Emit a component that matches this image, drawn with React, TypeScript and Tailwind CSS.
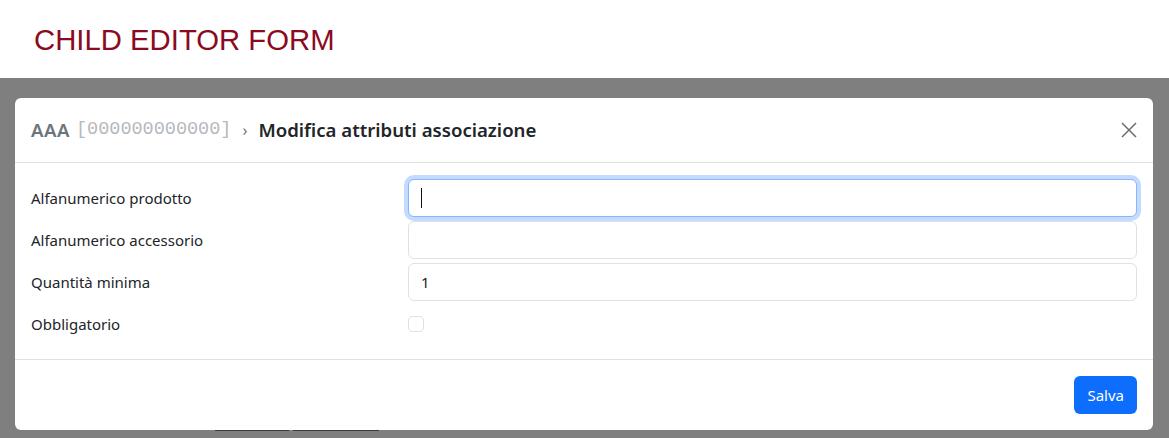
import React from "react";

const sans = { fontFamily: '"Noto Sans", "Open Sans", sans-serif' };

function Row({ label, children }: { label: string; children: React.ReactNode }) {
  return (
    <div className="flex items-center h-[38px]">
      <div className="w-[377px] shrink-0 text-[15px] text-[#212529]">{label}</div>
      <div className="flex-1">{children}</div>
    </div>
  );
}

export default function App() {
  return (
    <div className="w-[1169px] h-[438px] overflow-hidden flex flex-col bg-white" style={sans}>
      <div className="h-[78px] shrink-0 bg-white pl-[34px] pt-[22px]">
        <h1
          className="text-[29.3px] leading-[36px] text-[#8b0a1e]"
          style={{ fontFamily: '"Liberation Sans", Arial, sans-serif' }}
        >
          CHILD EDITOR FORM
        </h1>
      </div>
      <div className="relative flex-1 bg-[#7f7f7f] pt-[20px] px-[15px]">
        <div className="absolute left-[215px] top-[351px] w-[74px] h-[2px] bg-[#3a3a3a]" />
        <div className="absolute left-[293px] top-[351px] w-[86px] h-[2px] bg-[#3a3a3a]" />
        <div className="relative w-[1138px] bg-white rounded-[6px]">
          <div className="h-[65px] flex items-center justify-between pl-4 pr-4 border-b border-[#dee2e6]">
            <div className="flex items-center text-[18.6px] font-semibold">
              <span className="text-[#6c757d] tracking-[0.5px]">AAA</span>
              <span
                className="ml-[6px] text-[#b5b9bd] font-normal text-[18.5px]"
                style={{ fontFamily: '"Liberation Mono", monospace' }}
              >
                [000000000000]
              </span>
              <span className="ml-[11px] mr-[11px] text-[#6c757d] font-normal text-[16px]">›</span>
              <span className="text-[#212529]">Modifica attributi associazione</span>
            </div>
            <svg width="16" height="16" viewBox="0 0 16 16">
              <path d="M1 1 L15 15 M15 1 L1 15" stroke="#6c6c6c" strokeWidth="1.5" fill="none" />
            </svg>
          </div>
          <div className="p-4 flex flex-col gap-[4px]">
            <Row label="Alfanumerico prodotto">
              <div className="h-[38px] rounded-[6px] border border-[#86b7fe] shadow-[0_0_0_4px_rgba(13,110,253,0.25)] bg-white flex items-center pl-[12px]">
                <div className="w-px h-[20px] bg-[#111]" />
              </div>
            </Row>
            <Row label="Alfanumerico accessorio">
              <div className="h-[38px] rounded-[6px] border border-[#dee2e6] bg-white" />
            </Row>
            <Row label="Quantità minima">
              <div className="h-[38px] rounded-[6px] border border-[#dee2e6] bg-white flex items-center pl-[12px] text-[15px] text-[#212529]">
                1
              </div>
            </Row>
            <Row label="Obbligatorio">
              <div className="w-[16px] h-[16px] rounded-[4px] border border-[#dee2e6] bg-white" />
            </Row>
          </div>
          <div className="border-t border-[#dee2e6] h-[71px] flex items-center justify-end pr-4">
            <button className="h-[38px] px-[13px] rounded-[6px] bg-[#0d6efd] text-white text-[15px]">
              Salva
            </button>
          </div>
        </div>
      </div>
    </div>
  );
}
